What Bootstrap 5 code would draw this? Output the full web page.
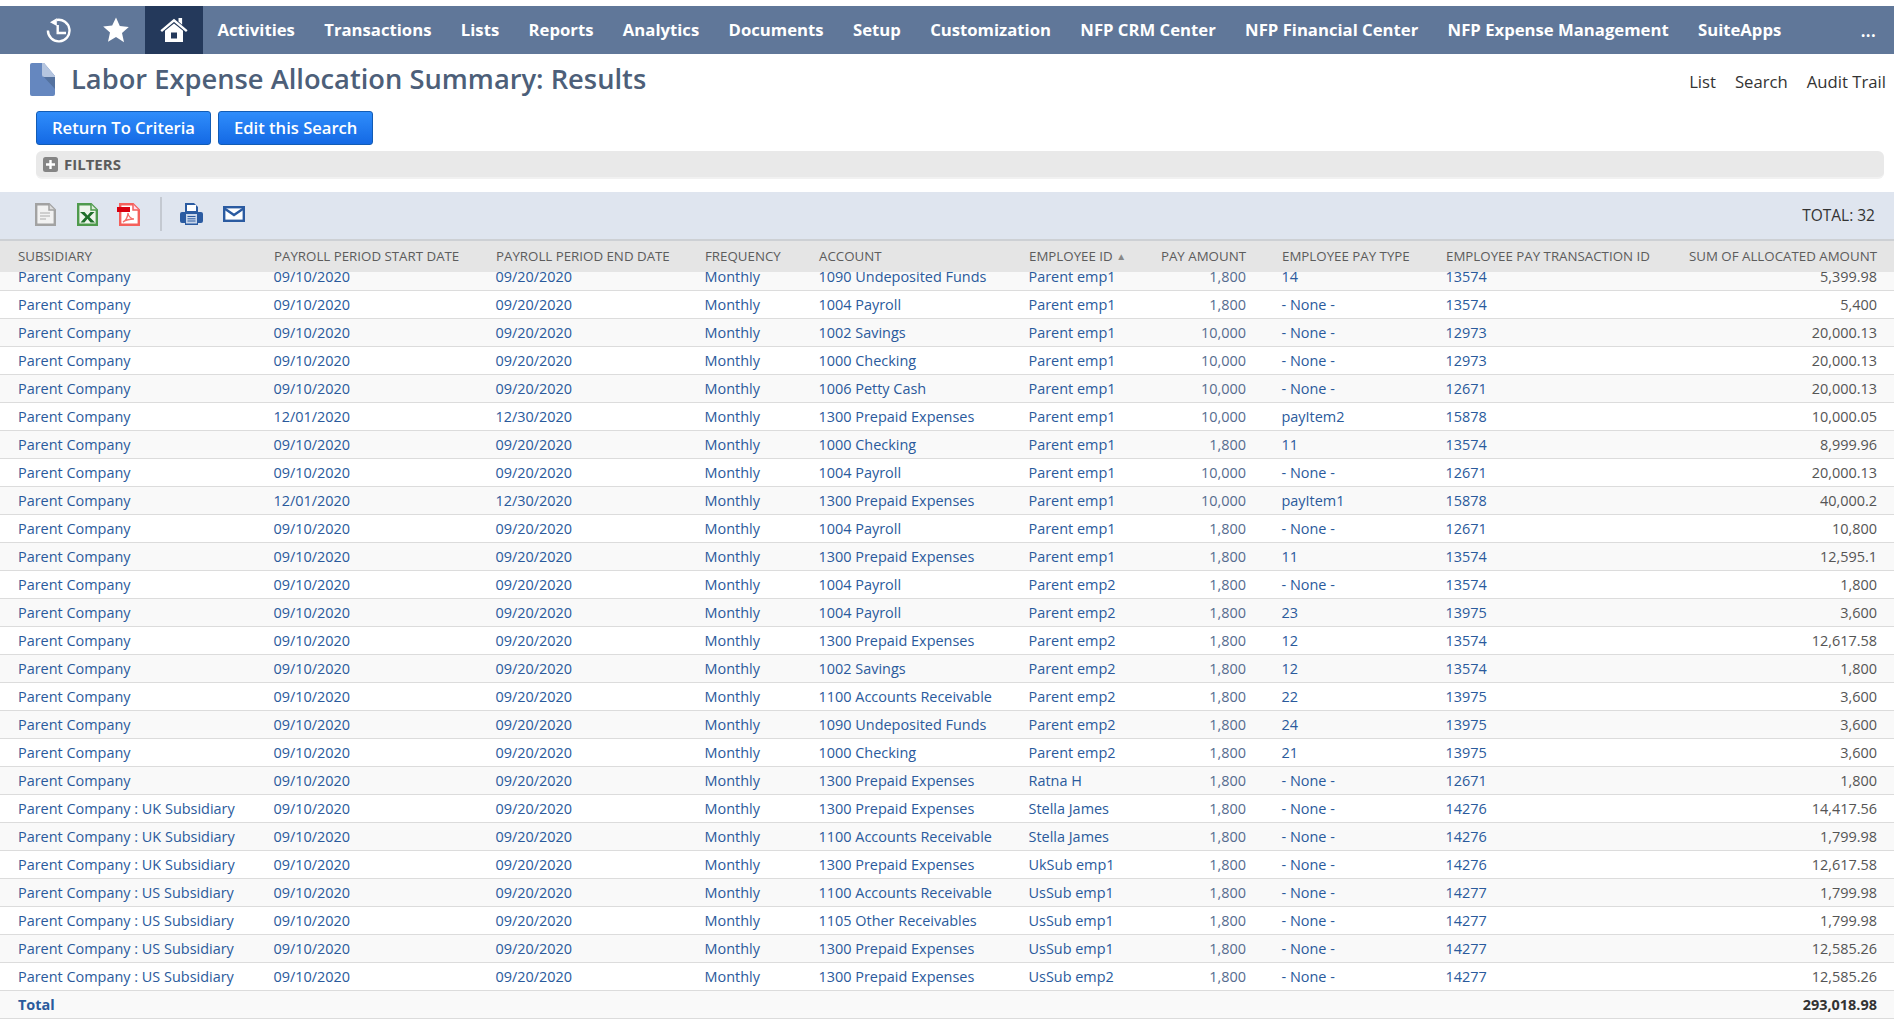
<!DOCTYPE html>
<html lang="en">
<head>
<meta charset="utf-8">
<title>Labor Expense Allocation Summary: Results</title>
<link href="https://cdn.jsdelivr.net/npm/bootstrap@5.3.0/dist/css/bootstrap.min.css" rel="stylesheet">
<style>
html,body{height:100%;overflow:hidden}
body{font-family:"Open Sans","Liberation Sans",sans-serif;background:#fff;color:#333;padding-top:6px}
.ns-nav{background:#607799;height:48px;padding:0;flex-wrap:nowrap;justify-content:flex-start}
.ns-iconbtn{width:58px;height:48px;display:flex;align-items:center;justify-content:center}
.ns-first{margin-left:29px}
.ns-home{background:#24395b}
.ns-nav .nav-link{color:#fff;font-weight:700;font-size:16.7px;padding:0 14.7px;line-height:48px;white-space:nowrap}
.ns-nav .navbar-nav{margin-left:-.3px}
.ns-more{margin-left:auto;margin-right:18px;color:#fff;font-weight:600;font-size:19px;line-height:48px}
.ns-head{height:51px;padding-left:30px}
.ns-head h1{font-size:27.3px;font-weight:600;color:#4d5f79;margin:-1px 0 0 16px;line-height:1}
.ns-head .ns-links{margin-left:auto;margin-right:8px;gap:19px;font-size:16.7px;padding-top:5px}
.ns-head .ns-links a{color:#333;text-decoration:none}
.ns-btns{padding:6px 0 0 36px;gap:7px}
.ns-btn{height:34px;padding:0 15px;font-size:16.6px;font-weight:600;color:#fff;line-height:1;border:1px solid #125cb5;border-radius:3px;background:linear-gradient(#2f8dfb,#1469e4)}
.ns-filter{margin:6px 10px 0 36px;height:28px;background:#e9e9e9;border-radius:6px;border-bottom:2px solid #f1f1f1;padding-left:7px;gap:6px;font-size:15px;font-weight:700;color:#5c5c5c}
.ns-tool{margin-top:13px;height:47px;background:#dfe5ef;padding-left:35px;font-size:15.5px}
.ns-tool svg,.ns-sep{display:block;margin-bottom:3px}
.ns-sep{width:2px;height:34px;background:#c4c9d1;margin-left:20px;margin-right:18px}
.ns-g21{margin-right:21px}
.ns-g19{margin-right:19px}
.ns-g20{margin-right:20px}
.ns-total{margin-left:auto;margin-right:19px;color:#333}
.ns-table{table-layout:fixed;width:1894px;margin:0;font-size:14.45px;--bs-table-bg:transparent}
.ns-table th,.ns-table td{padding:0 18px;white-space:nowrap;vertical-align:middle;border:0}
.ns-table th:last-child,.ns-table td:last-child{padding-right:17px}
.ns-table thead th{height:32px;background:#e5e5e5;font-size:13.3px;font-weight:400;color:#5c5c5c;text-transform:uppercase;border-top:2px solid #cdd0d4}
.ns-clip{overflow:hidden}
.ns-clip table{margin-top:-9px}
.ns-table tbody td,.ns-table tfoot td{height:28px;padding-top:1px;padding-left:17.5px}
.ns-table tbody td:first-child,.ns-table tfoot td:first-child{padding-left:18px}
.ns-table tbody tr:first-child td{height:27px;padding-top:2px}
.ns-table tbody td{border-bottom:1px solid #dcdcdc;color:#566c8f}
.ns-table tbody tr:nth-child(odd) td{background:#f9f9f9}
.ns-table tbody tr:nth-child(even) td{background:#fff}
.ns-table tbody td:last-child{color:#555}
.ns-table a{color:#2a5a9c;text-decoration:none}
.ns-table tfoot td{background:#f9f9f9;border-bottom:1px solid #dcdcdc;font-weight:700;color:#333}
.ns-table tfoot td:first-child{color:#2a5a9c}
.ns-arrow{font-size:10px;vertical-align:1px;color:#888}
.ns-c1{width:256px}.ns-c2{width:222px}.ns-c3{width:209px}.ns-c4{width:114px}.ns-c5{width:210px}.ns-c6{width:119px}.ns-c7{width:134px}.ns-c8{width:164px}.ns-c9{width:230px}.ns-c10{width:236px}
</style>
</head>
<body>
<nav class="navbar ns-nav d-flex">
  <a class="ns-iconbtn ns-first" href="#" aria-label="Recent"><svg width="26" height="26" viewBox="0 0 26 26" fill="none" stroke="#fff" stroke-width="2.400"><path d="M11.500 3A10.800 10.800 0 1 1 2.900 13.500"/><path d="M12.700 8v8h8.300"/><path d="M11.800 1.300v7.600L5 5.300z" fill="#fff" stroke="none"/></svg></a>
  <a class="ns-iconbtn" href="#" aria-label="Favorites"><svg width="28" height="28" viewBox="0 0 28 28"><path fill="#fff" d="M14 1.500l3.800 8.500 9 .9-6.800 6.100 2 9.200L14 21l-8 4.700 2-9.200-6.800-6.100 9-.9z"/></svg></a>
  <a class="ns-iconbtn ns-home" href="#" aria-label="Home"><svg width="28" height="26" viewBox="0 0 28 26"><path fill="#fff" d="M18.500 1h3.600v6.800l-3.600-3.200z"/><path fill="#fff" fill-rule="evenodd" d="M5 13.800L14 6.400l9 7.400V25H5zM11 15.500v6h6v-6z"/><path fill="none" stroke="#fff" stroke-width="2.400" d="M1.200 14.200L14 3.400l12.800 10.800"/></svg></a>
  <ul class="navbar-nav flex-row">
    <li class="nav-item"><a class="nav-link" href="#">Activities</a></li>
    <li class="nav-item"><a class="nav-link" href="#">Transactions</a></li>
    <li class="nav-item"><a class="nav-link" href="#">Lists</a></li>
    <li class="nav-item"><a class="nav-link" href="#">Reports</a></li>
    <li class="nav-item"><a class="nav-link" href="#">Analytics</a></li>
    <li class="nav-item"><a class="nav-link" href="#">Documents</a></li>
    <li class="nav-item"><a class="nav-link" href="#">Setup</a></li>
    <li class="nav-item"><a class="nav-link" href="#">Customization</a></li>
    <li class="nav-item"><a class="nav-link" href="#">NFP CRM Center</a></li>
    <li class="nav-item"><a class="nav-link" href="#">NFP Financial Center</a></li>
    <li class="nav-item"><a class="nav-link" href="#">NFP Expense Management</a></li>
    <li class="nav-item"><a class="nav-link" href="#">SuiteApps</a></li>
  </ul>
  <span class="ns-more">...</span>
</nav>
<div class="d-flex align-items-center ns-head">
  <svg width="25" height="33" viewBox="0 0 25 33"><path fill="#6587bf" d="M2 0h12l11 13v18a2 2 0 0 1-2 2H2a2 2 0 0 1-2-2V2a2 2 0 0 1 2-2z"/><path fill="#b5c5df" d="M12 0h2l11 13v1H14a2 2 0 0 1-2-2z"/><path fill="#54729f" d="M12 12l13 14V14H14z"/></svg>
  <h1>Labor Expense Allocation Summary: Results</h1>
  <div class="d-flex ns-links"><a href="#">List</a><a href="#">Search</a><a href="#">Audit Trail</a></div>
</div>
<div class="d-flex ns-btns">
  <button type="button" class="btn ns-btn">Return To Criteria</button>
  <button type="button" class="btn ns-btn">Edit this Search</button>
</div>
<div class="d-flex align-items-center ns-filter">
  <svg width="15" height="15" viewBox="0 0 15 15"><rect width="15" height="15" rx="2.500" fill="#858585"/><path d="M7.500 3v9M3 7.500h9" stroke="#fff" stroke-width="2.400"/></svg>
  <span>FILTERS</span>
</div>
<div class="d-flex align-items-center ns-tool">
  <svg width="21" height="23" viewBox="0 0 21 23" class="ns-g21"><path d="M1.200 1.200h12.800l5.800 5.800v14.800H1.200z" fill="#f2f2f2" stroke="#a2a2a2" stroke-width="2.400"/><path d="M14 1.200v5.800h5.800" fill="#dcdcdc" stroke="#a2a2a2" stroke-width="1.500"/><path d="M5 10h10M5 13h10M5 16h6" stroke="#c4c4c4" stroke-width="1.400"/></svg>
  <svg width="21" height="23" viewBox="0 0 21 23" class="ns-g19"><path d="M1.200 1.200h12.800l5.800 5.800v14.800H1.200z" fill="#eef5ec" stroke="#4f9a4d" stroke-width="2.400"/><path d="M14 1.200v5.800h5.800" fill="#dcebd9" stroke="#4f9a4d" stroke-width="1.500"/><path d="M3 9h4.500l3 3.500 3-3.500h4l-5 5 5.500 5.500h-4.500l-3-3.800-3 3.800h-4l5-5.500z" fill="#1f6f2a"/></svg>
  <svg width="23" height="23" viewBox="0 0 23 23"><path d="M3.200 1.200h12.800l5.800 5.800v14.800H3.200z" fill="#fff" stroke="#f4605c" stroke-width="2.400"/><path d="M16 1.200v5.800h5.800" fill="#fde" stroke="#f4605c" stroke-width="1.500"/><rect x="0" y="4" width="13" height="5" fill="#d9000f"/><path d="M6 19c3-1 5-6 5-9 0 3 3 6 6 6-3 0-8 1-11 3z" fill="none" stroke="#f4706c" stroke-width="1.400"/></svg>
  <span class="ns-sep"></span>
  <svg width="23" height="22" viewBox="0 0 23 22" class="ns-g20"><path fill="#2b5ba1" d="M5 0h9l4 4v5h3a2 2 0 0 1 2 2v7a2 2 0 0 1-2 2h-3v2H5v-2H2a2 2 0 0 1-2-2v-7a2 2 0 0 1 2-2h3z"/><rect x="7" y="2" width="9" height="6" fill="#fff"/><rect x="6" y="11" width="11" height="9.500" fill="#c9d6ea"/><path d="M7.500 13.500h8M7.500 15.800h8M7.500 18h8" stroke="#2b5ba1" stroke-width="1"/></svg>
  <svg width="22" height="16" viewBox="0 0 22 16"><rect x="1.200" y="1.200" width="19.600" height="13.600" fill="#fff" stroke="#2b5ba1" stroke-width="2.400"/><path d="M1.500 2.500L11 9l9.500-6.500" fill="none" stroke="#2b5ba1" stroke-width="2.400"/></svg>
  <span class="ns-total">TOTAL: 32</span>
</div>
<table class="table ns-table">
<colgroup><col class="ns-c1"><col class="ns-c2"><col class="ns-c3"><col class="ns-c4"><col class="ns-c5"><col class="ns-c6"><col class="ns-c7"><col class="ns-c8"><col class="ns-c9"><col class="ns-c10"></colgroup>
<thead><tr><th>Subsidiary</th><th>Payroll Period Start Date</th><th>Payroll Period End Date</th><th>Frequency</th><th>Account</th><th>Employee ID <span class="ns-arrow">&#9650;</span></th><th class="text-end">Pay Amount</th><th>Employee Pay Type</th><th>Employee Pay Transaction ID</th><th class="text-end">Sum of Allocated Amount</th></tr></thead>
</table>
<div class="ns-clip">
<table class="table ns-table">
<colgroup><col class="ns-c1"><col class="ns-c2"><col class="ns-c3"><col class="ns-c4"><col class="ns-c5"><col class="ns-c6"><col class="ns-c7"><col class="ns-c8"><col class="ns-c9"><col class="ns-c10"></colgroup>
<tbody>
<tr><td><a href="#">Parent Company</a></td><td><a href="#">09/10/2020</a></td><td><a href="#">09/20/2020</a></td><td><a href="#">Monthly</a></td><td><a href="#">1090 Undeposited Funds</a></td><td><a href="#">Parent emp1</a></td><td class="text-end">1,800</td><td><a href="#">14</a></td><td><a href="#">13574</a></td><td class="text-end">5,399.98</td></tr>
<tr><td><a href="#">Parent Company</a></td><td><a href="#">09/10/2020</a></td><td><a href="#">09/20/2020</a></td><td><a href="#">Monthly</a></td><td><a href="#">1004 Payroll</a></td><td><a href="#">Parent emp1</a></td><td class="text-end">1,800</td><td><a href="#">- None -</a></td><td><a href="#">13574</a></td><td class="text-end">5,400</td></tr>
<tr><td><a href="#">Parent Company</a></td><td><a href="#">09/10/2020</a></td><td><a href="#">09/20/2020</a></td><td><a href="#">Monthly</a></td><td><a href="#">1002 Savings</a></td><td><a href="#">Parent emp1</a></td><td class="text-end">10,000</td><td><a href="#">- None -</a></td><td><a href="#">12973</a></td><td class="text-end">20,000.13</td></tr>
<tr><td><a href="#">Parent Company</a></td><td><a href="#">09/10/2020</a></td><td><a href="#">09/20/2020</a></td><td><a href="#">Monthly</a></td><td><a href="#">1000 Checking</a></td><td><a href="#">Parent emp1</a></td><td class="text-end">10,000</td><td><a href="#">- None -</a></td><td><a href="#">12973</a></td><td class="text-end">20,000.13</td></tr>
<tr><td><a href="#">Parent Company</a></td><td><a href="#">09/10/2020</a></td><td><a href="#">09/20/2020</a></td><td><a href="#">Monthly</a></td><td><a href="#">1006 Petty Cash</a></td><td><a href="#">Parent emp1</a></td><td class="text-end">10,000</td><td><a href="#">- None -</a></td><td><a href="#">12671</a></td><td class="text-end">20,000.13</td></tr>
<tr><td><a href="#">Parent Company</a></td><td><a href="#">12/01/2020</a></td><td><a href="#">12/30/2020</a></td><td><a href="#">Monthly</a></td><td><a href="#">1300 Prepaid Expenses</a></td><td><a href="#">Parent emp1</a></td><td class="text-end">10,000</td><td><a href="#">payItem2</a></td><td><a href="#">15878</a></td><td class="text-end">10,000.05</td></tr>
<tr><td><a href="#">Parent Company</a></td><td><a href="#">09/10/2020</a></td><td><a href="#">09/20/2020</a></td><td><a href="#">Monthly</a></td><td><a href="#">1000 Checking</a></td><td><a href="#">Parent emp1</a></td><td class="text-end">1,800</td><td><a href="#">11</a></td><td><a href="#">13574</a></td><td class="text-end">8,999.96</td></tr>
<tr><td><a href="#">Parent Company</a></td><td><a href="#">09/10/2020</a></td><td><a href="#">09/20/2020</a></td><td><a href="#">Monthly</a></td><td><a href="#">1004 Payroll</a></td><td><a href="#">Parent emp1</a></td><td class="text-end">10,000</td><td><a href="#">- None -</a></td><td><a href="#">12671</a></td><td class="text-end">20,000.13</td></tr>
<tr><td><a href="#">Parent Company</a></td><td><a href="#">12/01/2020</a></td><td><a href="#">12/30/2020</a></td><td><a href="#">Monthly</a></td><td><a href="#">1300 Prepaid Expenses</a></td><td><a href="#">Parent emp1</a></td><td class="text-end">10,000</td><td><a href="#">payItem1</a></td><td><a href="#">15878</a></td><td class="text-end">40,000.2</td></tr>
<tr><td><a href="#">Parent Company</a></td><td><a href="#">09/10/2020</a></td><td><a href="#">09/20/2020</a></td><td><a href="#">Monthly</a></td><td><a href="#">1004 Payroll</a></td><td><a href="#">Parent emp1</a></td><td class="text-end">1,800</td><td><a href="#">- None -</a></td><td><a href="#">12671</a></td><td class="text-end">10,800</td></tr>
<tr><td><a href="#">Parent Company</a></td><td><a href="#">09/10/2020</a></td><td><a href="#">09/20/2020</a></td><td><a href="#">Monthly</a></td><td><a href="#">1300 Prepaid Expenses</a></td><td><a href="#">Parent emp1</a></td><td class="text-end">1,800</td><td><a href="#">11</a></td><td><a href="#">13574</a></td><td class="text-end">12,595.1</td></tr>
<tr><td><a href="#">Parent Company</a></td><td><a href="#">09/10/2020</a></td><td><a href="#">09/20/2020</a></td><td><a href="#">Monthly</a></td><td><a href="#">1004 Payroll</a></td><td><a href="#">Parent emp2</a></td><td class="text-end">1,800</td><td><a href="#">- None -</a></td><td><a href="#">13574</a></td><td class="text-end">1,800</td></tr>
<tr><td><a href="#">Parent Company</a></td><td><a href="#">09/10/2020</a></td><td><a href="#">09/20/2020</a></td><td><a href="#">Monthly</a></td><td><a href="#">1004 Payroll</a></td><td><a href="#">Parent emp2</a></td><td class="text-end">1,800</td><td><a href="#">23</a></td><td><a href="#">13975</a></td><td class="text-end">3,600</td></tr>
<tr><td><a href="#">Parent Company</a></td><td><a href="#">09/10/2020</a></td><td><a href="#">09/20/2020</a></td><td><a href="#">Monthly</a></td><td><a href="#">1300 Prepaid Expenses</a></td><td><a href="#">Parent emp2</a></td><td class="text-end">1,800</td><td><a href="#">12</a></td><td><a href="#">13574</a></td><td class="text-end">12,617.58</td></tr>
<tr><td><a href="#">Parent Company</a></td><td><a href="#">09/10/2020</a></td><td><a href="#">09/20/2020</a></td><td><a href="#">Monthly</a></td><td><a href="#">1002 Savings</a></td><td><a href="#">Parent emp2</a></td><td class="text-end">1,800</td><td><a href="#">12</a></td><td><a href="#">13574</a></td><td class="text-end">1,800</td></tr>
<tr><td><a href="#">Parent Company</a></td><td><a href="#">09/10/2020</a></td><td><a href="#">09/20/2020</a></td><td><a href="#">Monthly</a></td><td><a href="#">1100 Accounts Receivable</a></td><td><a href="#">Parent emp2</a></td><td class="text-end">1,800</td><td><a href="#">22</a></td><td><a href="#">13975</a></td><td class="text-end">3,600</td></tr>
<tr><td><a href="#">Parent Company</a></td><td><a href="#">09/10/2020</a></td><td><a href="#">09/20/2020</a></td><td><a href="#">Monthly</a></td><td><a href="#">1090 Undeposited Funds</a></td><td><a href="#">Parent emp2</a></td><td class="text-end">1,800</td><td><a href="#">24</a></td><td><a href="#">13975</a></td><td class="text-end">3,600</td></tr>
<tr><td><a href="#">Parent Company</a></td><td><a href="#">09/10/2020</a></td><td><a href="#">09/20/2020</a></td><td><a href="#">Monthly</a></td><td><a href="#">1000 Checking</a></td><td><a href="#">Parent emp2</a></td><td class="text-end">1,800</td><td><a href="#">21</a></td><td><a href="#">13975</a></td><td class="text-end">3,600</td></tr>
<tr><td><a href="#">Parent Company</a></td><td><a href="#">09/10/2020</a></td><td><a href="#">09/20/2020</a></td><td><a href="#">Monthly</a></td><td><a href="#">1300 Prepaid Expenses</a></td><td><a href="#">Ratna H</a></td><td class="text-end">1,800</td><td><a href="#">- None -</a></td><td><a href="#">12671</a></td><td class="text-end">1,800</td></tr>
<tr><td><a href="#">Parent Company : UK Subsidiary</a></td><td><a href="#">09/10/2020</a></td><td><a href="#">09/20/2020</a></td><td><a href="#">Monthly</a></td><td><a href="#">1300 Prepaid Expenses</a></td><td><a href="#">Stella James</a></td><td class="text-end">1,800</td><td><a href="#">- None -</a></td><td><a href="#">14276</a></td><td class="text-end">14,417.56</td></tr>
<tr><td><a href="#">Parent Company : UK Subsidiary</a></td><td><a href="#">09/10/2020</a></td><td><a href="#">09/20/2020</a></td><td><a href="#">Monthly</a></td><td><a href="#">1100 Accounts Receivable</a></td><td><a href="#">Stella James</a></td><td class="text-end">1,800</td><td><a href="#">- None -</a></td><td><a href="#">14276</a></td><td class="text-end">1,799.98</td></tr>
<tr><td><a href="#">Parent Company : UK Subsidiary</a></td><td><a href="#">09/10/2020</a></td><td><a href="#">09/20/2020</a></td><td><a href="#">Monthly</a></td><td><a href="#">1300 Prepaid Expenses</a></td><td><a href="#">UkSub emp1</a></td><td class="text-end">1,800</td><td><a href="#">- None -</a></td><td><a href="#">14276</a></td><td class="text-end">12,617.58</td></tr>
<tr><td><a href="#">Parent Company : US Subsidiary</a></td><td><a href="#">09/10/2020</a></td><td><a href="#">09/20/2020</a></td><td><a href="#">Monthly</a></td><td><a href="#">1100 Accounts Receivable</a></td><td><a href="#">UsSub emp1</a></td><td class="text-end">1,800</td><td><a href="#">- None -</a></td><td><a href="#">14277</a></td><td class="text-end">1,799.98</td></tr>
<tr><td><a href="#">Parent Company : US Subsidiary</a></td><td><a href="#">09/10/2020</a></td><td><a href="#">09/20/2020</a></td><td><a href="#">Monthly</a></td><td><a href="#">1105 Other Receivables</a></td><td><a href="#">UsSub emp1</a></td><td class="text-end">1,800</td><td><a href="#">- None -</a></td><td><a href="#">14277</a></td><td class="text-end">1,799.98</td></tr>
<tr><td><a href="#">Parent Company : US Subsidiary</a></td><td><a href="#">09/10/2020</a></td><td><a href="#">09/20/2020</a></td><td><a href="#">Monthly</a></td><td><a href="#">1300 Prepaid Expenses</a></td><td><a href="#">UsSub emp1</a></td><td class="text-end">1,800</td><td><a href="#">- None -</a></td><td><a href="#">14277</a></td><td class="text-end">12,585.26</td></tr>
<tr><td><a href="#">Parent Company : US Subsidiary</a></td><td><a href="#">09/10/2020</a></td><td><a href="#">09/20/2020</a></td><td><a href="#">Monthly</a></td><td><a href="#">1300 Prepaid Expenses</a></td><td><a href="#">UsSub emp2</a></td><td class="text-end">1,800</td><td><a href="#">- None -</a></td><td><a href="#">14277</a></td><td class="text-end">12,585.26</td></tr>
</tbody>
<tfoot><tr><td>Total</td><td></td><td></td><td></td><td></td><td></td><td></td><td></td><td></td><td class="text-end">293,018.98</td></tr></tfoot>
</table>
</div>
</body>
</html>
